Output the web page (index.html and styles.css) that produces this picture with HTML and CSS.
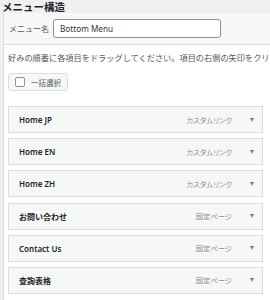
FILE: index.html
```html
<!DOCTYPE html>
<html lang="ja">
<head>
    <meta charset="UTF-8">
    <meta name="viewport" content="width=device-width, initial-scale=1.0">
    <title>メニュー構造</title>
    <link rel="stylesheet" href="styles.css">
</head>
<body>
    <h2 class="title">メニュー構造</h2>

    <div class="panel">
        <!-- Menu name -->
        <div class="panel-head">
            <label class="name-label" for="menuName">メニュー名</label>
            <input type="text" id="menuName" class="name-input" value="Bottom Menu">
        </div>

        <!-- Menu items -->
        <div class="panel-body">
            <p class="hint">好みの順番に各項目をドラッグしてください。項目の右側の矢印をクリックすると、追加の設定オプションが表示されます。</p>
            <label class="bulk"><input type="checkbox" class="bulk-check">一括選択</label>

            <ul class="items">
                <li class="item"><span class="item-title">Home JP</span><span class="item-type">カスタムリンク</span><span class="item-arrow"></span></li>
                <li class="item"><span class="item-title">Home EN</span><span class="item-type">カスタムリンク</span><span class="item-arrow"></span></li>
                <li class="item"><span class="item-title">Home ZH</span><span class="item-type">カスタムリンク</span><span class="item-arrow"></span></li>
                <li class="item"><span class="item-title">お問い合わせ</span><span class="item-type">固定ページ</span><span class="item-arrow"></span></li>
                <li class="item"><span class="item-title">Contact Us</span><span class="item-type">固定ページ</span><span class="item-arrow"></span></li>
                <li class="item"><span class="item-title zh">查詢表格</span><span class="item-type">固定ページ</span><span class="item-arrow"></span></li>
            </ul>
        </div>
    </div>
</body>
</html>
```

FILE: styles.css
```css
body {
    font-family: "Noto Sans", "Noto Sans CJK JP", sans-serif;
    background-color: #f0f0f1;
    color: #1d2327;
    margin: 0;
    padding: 0;
    overflow: hidden;
}
.title {
    font-family: "Noto Sans CJK JP", sans-serif;
    font-size: 10.5px;
    font-weight: 700;
    line-height: 13px;
    height: 13px;
    margin: 0;
    padding-left: 2px;
}
.panel {
    margin-left: 3px;
    width: 300px;
    background-color: #fff;
    border-left: 1px solid #dcdcde;
}
.panel-head {
    display: flex;
    align-items: center;
    height: 31px;
    padding-left: 5px;
    background-color: #f6f7f7;
    border-bottom: 1px solid #dcdcde;
}
.name-label {
    font-family: "Noto Sans CJK JP", sans-serif;
    font-size: 8px;
    color: #50575e;
    margin-right: 4px;
}
.name-input {
    box-sizing: border-box;
    width: 168px;
    height: 19px;
    margin: 0;
    padding: 0 6px;
    border: 1px solid #8c8f94;
    border-radius: 3px;
    font-family: "Noto Sans", sans-serif;
    font-size: 8.2px;
    color: #2c3338;
    background: #fff;
}
.panel-body {
    padding: 6px 4px 10px;
}
.hint {
    font-family: "Noto Sans CJK JP", sans-serif;
    font-size: 8.2px;
    line-height: 12px;
    color: #50575e;
    margin: 0;
    width: 262px;
    white-space: nowrap;
    overflow: hidden;
}
.bulk {
    box-sizing: border-box;
    display: flex;
    align-items: center;
    width: 60px;
    height: 18px;
    margin-top: 10px;
    padding-left: 6px;
    background-color: #f6f7f7;
    border: 1px solid #dcdcde;
    border-radius: 3px;
    font-family: "Noto Sans CJK JP", sans-serif;
    font-size: 7.5px;
    color: #50575e;
}
.bulk-check {
    appearance: none;
    -webkit-appearance: none;
    width: 10px;
    height: 10px;
    margin: 0 6px 0 0;
    border: 1px solid #8c8f94;
    border-radius: 2px;
    background: #fff;
}
.items {
    list-style: none;
    margin: 15px 0 0;
    padding: 0;
}
.item {
    box-sizing: border-box;
    display: flex;
    align-items: center;
    width: 255px;
    height: 27px;
    margin-bottom: 5.2px;
    padding: 0 8px 0 10px;
    background-color: #f6f7f7;
    border: 1px solid #dcdcde;
}
.item-title {
    flex: 1;
    font-family: "Noto Sans", "Noto Sans CJK JP", sans-serif;
    font-size: 8px;
    font-weight: 600;
    color: #1d2327;
}
.item-title.zh {
    font-family: "Noto Sans CJK TC", sans-serif;
}
.item-type {
    font-family: "Noto Sans CJK JP", sans-serif;
    font-feature-settings: "palt";
    font-size: 7.3px;
    color: #8c8f94;
    margin-right: 18px;
}
.item-arrow {
    width: 0;
    height: 0;
    border-left: 2.5px solid transparent;
    border-right: 2.5px solid transparent;
    border-top: 4px solid #787c82;
}
```
